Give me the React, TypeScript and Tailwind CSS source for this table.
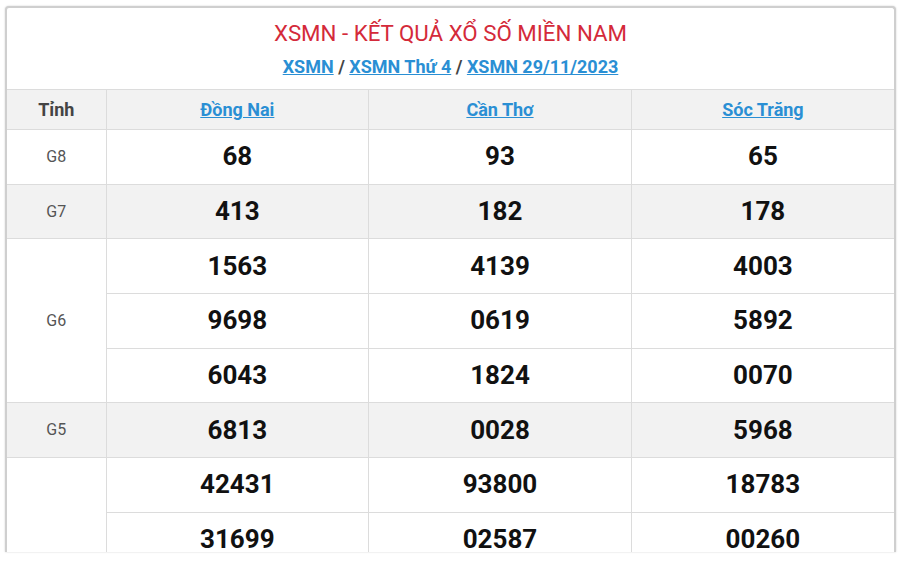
import React from "react";

const rows: { label: string; vals: string[][]; bg?: boolean }[] = [
  { label: "G8", vals: [["68", "93", "65"]] },
  { label: "G7", vals: [["413", "182", "178"]], bg: true },
  { label: "G6", vals: [["1563", "4139", "4003"], ["9698", "0619", "5892"], ["6043", "1824", "0070"]] },
  { label: "G5", vals: [["6813", "0028", "5968"]], bg: true },
  { label: "", vals: [["42431", "93800", "18783"], ["31699", "02587", "00260"]] },
];

export default function App() {
  return (
    <div className="w-[900px] h-[561px] bg-white overflow-hidden" style={{ fontFamily: "Roboto, 'Liberation Sans', sans-serif" }}>
      <div className="ml-[5px] mt-[6px] w-[891px] h-[546px] overflow-hidden border-2 border-b-0 border-[#cfcfcf] rounded-t-[4px] shadow-[0_0_2px_rgba(0,0,0,0.2)] bg-white">
        <div className="h-[81px] flex flex-col items-center">
          <div className="mt-[12px] text-[22.3px] leading-[26px] text-[#d42a3a]">XSMN - KẾT QUẢ XỔ SỐ MIỀN NAM</div>
          <div className="mt-[10px] text-[18px] leading-[22px] font-bold text-[#444]">
            <a className="text-[#2a8fd4] underline">XSMN</a> / <a className="text-[#2a8fd4] underline">XSMN Thứ 4</a> / <a className="text-[#2a8fd4] underline">XSMN 29/11/2023</a>
          </div>
        </div>
        <table className="w-full border-collapse table-fixed">
          <colgroup>
            <col className="w-[99px]" />
            <col />
            <col />
            <col />
          </colgroup>
          <thead>
            <tr className="h-[40px] bg-[#f2f2f2]">
              <th className="border border-l-0 border-[#dcdcdc] text-[18px] font-bold text-[#444]">Tỉnh</th>
              <th className="border border-[#dcdcdc] text-[18px] font-bold"><a className="text-[#2a8fd4] underline">Đồng Nai</a></th>
              <th className="border border-[#dcdcdc] text-[18px] font-bold"><a className="text-[#2a8fd4] underline">Cần Thơ</a></th>
              <th className="border border-r-0 border-[#dcdcdc] text-[18px] font-bold"><a className="text-[#2a8fd4] underline">Sóc Trăng</a></th>
            </tr>
          </thead>
          <tbody>
            {rows.map((r, i) =>
              r.vals.map((v, j) => (
                <tr key={i + "-" + j} className={"h-[54.7px] " + (r.bg ? "bg-[#f2f2f2]" : "bg-white")}>
                  {j === 0 && (
                    <td rowSpan={r.vals.length} className="border border-l-0 border-[#dcdcdc] text-center text-[16px] text-[#555]">
                      {r.label}
                    </td>
                  )}
                  {v.map((n, k) => (
                    <td key={k} className={"border border-[#dcdcdc] text-center text-[26px] font-bold text-[#111] " + (k === 2 ? "border-r-0" : "")}>
                      {n}
                    </td>
                  ))}
                </tr>
              ))
            )}
          </tbody>
        </table>
      </div>
    </div>
  );
}
